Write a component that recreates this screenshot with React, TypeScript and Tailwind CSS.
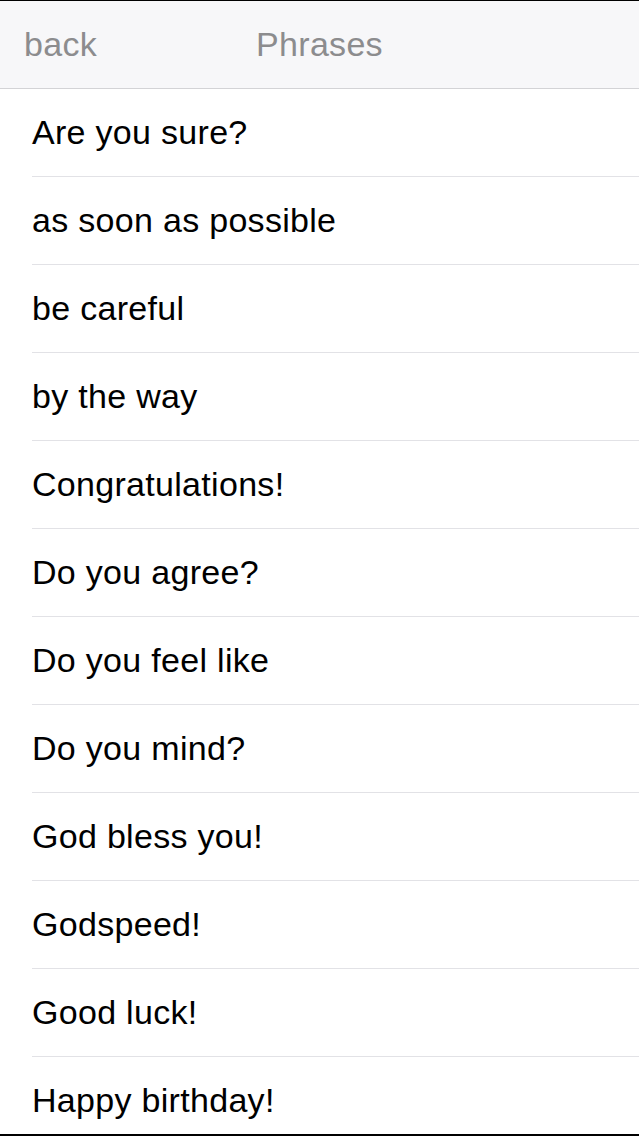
import React from "react";

const phrases: string[] = [
    "Are you sure?",
    "as soon as possible",
    "be careful",
    "by the way",
    "Congratulations!",
    "Do you agree?",
    "Do you feel like",
    "Do you mind?",
    "God bless you!",
    "Godspeed!",
    "Good luck!",
    "Happy birthday!",
];

export default function App() {
    return (
        <div
            className="flex flex-col h-[1136px] w-full overflow-hidden bg-white border-t border-b-2 border-black"
            style={{ fontFamily: '"Liberation Sans", Arial, sans-serif' }}
        >
            <div className="relative flex items-center h-[88px] shrink-0 bg-[#f7f7f9] border-b border-[#d3d3d6]">
                <span className="pl-[24px] text-[34px] tracking-[0.3px] text-[#8c8c8e]">back</span>
                <span className="absolute left-1/2 -translate-x-1/2 text-[34px] tracking-[0.3px] text-[#8c8c8e]">
                    Phrases
                </span>
            </div>
            <ul className="flex-1 overflow-hidden pl-8">
                {phrases.map((phrase, index) => (
                    <li
                        key={index}
                        className="flex items-center h-[88px] border-b border-[#e2e2e6] text-[34px] tracking-[0.3px] text-black"
                    >
                        {phrase}
                    </li>
                ))}
            </ul>
        </div>
    );
}
